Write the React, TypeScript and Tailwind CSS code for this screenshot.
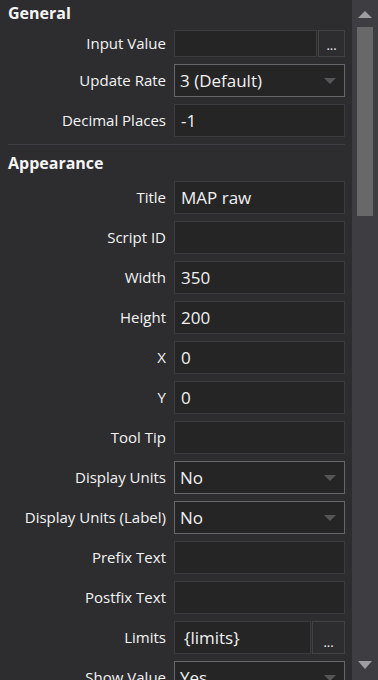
import React from "react";

type Row = {
  label: string;
  kind: "text" | "select" | "button";
  value?: string;
  h?: number;
};

const general: Row[] = [
  { label: "Input Value", kind: "button", value: "", h: 27 },
  { label: "Update Rate", kind: "select", value: "3 (Default)" },
  { label: "Decimal Places", kind: "text", value: "-1" },
];

const appearance: Row[] = [
  { label: "Title", kind: "text", value: "MAP raw" },
  { label: "Script ID", kind: "text", value: "" },
  { label: "Width", kind: "text", value: "350" },
  { label: "Height", kind: "text", value: "200" },
  { label: "X", kind: "text", value: "0" },
  { label: "Y", kind: "text", value: "0" },
  { label: "Tool Tip", kind: "text", value: "" },
  { label: "Display Units", kind: "select", value: "No" },
  { label: "Display Units (Label)", kind: "select", value: "No" },
  { label: "Prefix Text", kind: "text", value: "" },
  { label: "Postfix Text", kind: "text", value: "" },
  { label: "Limits", kind: "button", value: "{limits}" },
  { label: "Show Value", kind: "select", value: "Yes" },
];

const Caret = () => (
  <svg width="12" height="6" viewBox="0 0 12 6" className="shrink-0">
    <path d="M0 0 H12 L6 6 Z" fill="#56565a" />
  </svg>
);

const Field = ({ row }: { row: Row }) => {
  const h = row.h ?? 33;
  if (row.kind === "select") {
    return (
      <div
        className="flex-1 flex items-center justify-between pl-[5px] pr-[8px] bg-[#252526] border border-[#67676b] text-[17px] text-[#f1f1f1]"
        style={{ height: h }}
      >
        <span>{row.value}</span>
        <Caret />
      </div>
    );
  }
  if (row.kind === "button") {
    return (
      <div className="flex-1 flex gap-px" style={{ height: h }}>
        <div className="flex-1 flex items-center pl-[9px] bg-[#252526] border border-[#3c3c40] text-[17px] text-[#f1f1f1]">
          {row.value}
        </div>
        <div
          className="shrink-0 flex items-end justify-center pb-[4px] border border-[#434346] text-[13px] leading-none text-[#f1f1f1]"
          style={{ width: h }}
        >
          ...
        </div>
      </div>
    );
  }
  return (
    <div
      className="flex-1 flex items-center pl-[6px] bg-[#252526] border border-[#3c3c40] text-[17px] text-[#f1f1f1]"
      style={{ height: h }}
    >
      {row.value}
    </div>
  );
};

const PropRow = ({ row }: { row: Row }) => (
  <div className="shrink-0 flex items-center gap-[8px]">
    <div className="w-[158px] shrink-0 text-right text-[15px] text-[#f4f4f4] whitespace-nowrap">
      {row.label}
    </div>
    <Field row={row} />
  </div>
);

const Scrollbar = () => (
  <div className="w-[26px] shrink-0 bg-[#3e3e42] flex flex-col items-center">
    <svg width="14" height="7" viewBox="0 0 14 7" className="mt-[11px] shrink-0">
      <path d="M0 7 L7 0 L14 7 Z" fill="#9e9e9e" />
    </svg>
    <div className="mt-[9px] w-[16px] h-[189px] shrink-0 bg-[#686868]" />
    <div className="flex-1" />
    <svg width="14" height="8" viewBox="0 0 14 8" className="mb-[11px] shrink-0">
      <path d="M0 0 H14 L7 8 Z" fill="#9e9e9e" />
    </svg>
  </div>
);

export default function App() {
  return (
    <div
      className="w-[378px] h-[680px] overflow-hidden flex bg-[#2d2d30]"
      style={{ fontFamily: "'Open Sans', 'Noto Sans', sans-serif" }}
    >
      <div className="flex-1 flex flex-col pl-[8px] pr-[7px]">
        <div className="h-[25px] shrink-0 flex items-center text-[16px] font-bold text-[#f4f4f4]">General</div>
        <div className="mt-[5px] shrink-0 flex flex-col gap-[7px]">
          {general.map((r) => (
            <PropRow key={r.label} row={r} />
          ))}
        </div>
        <div className="mt-[7px] h-px shrink-0 bg-[#3f3f46]" />
        <div className="h-[36px] shrink-0 flex items-center text-[16px] font-bold text-[#f4f4f4]">Appearance</div>
        <div className="shrink-0 flex flex-col gap-[7px]">
          {appearance.map((r) => (
            <PropRow key={r.label} row={r} />
          ))}
        </div>
      </div>
      <Scrollbar />
    </div>
  );
}
